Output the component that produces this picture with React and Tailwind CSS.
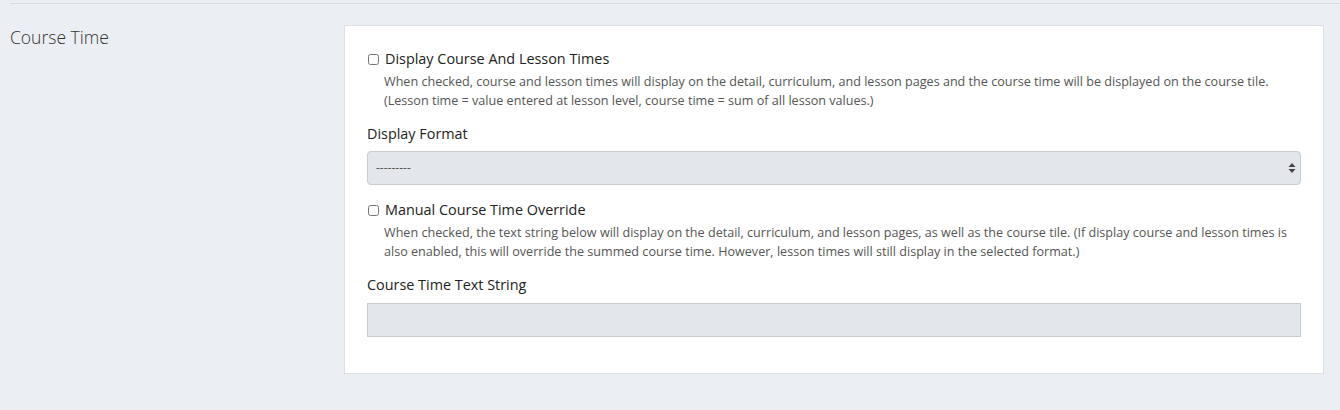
import React from 'react';

const font = { fontFamily: '"Open Sans", "Liberation Sans", sans-serif' };

const Check = ({ label, children }) => (
  <div className="flex flex-col">
    <label className="flex items-center gap-[6px] text-[14.4px] leading-[20px] text-[#222]">
      <input type="checkbox" className="w-[11px] h-[11px] m-0 ml-[1px] accent-[#888]" />
      <span>{label}</span>
    </label>
    <p className="pl-[17px] mt-[3px] text-[12.6px] leading-[19px] text-[#555]">{children}</p>
  </div>
);

export default function App() {
  return (
    <div className="w-[1340px] h-[410px] bg-[#ebeff3] overflow-hidden" style={font}>
      <div className="ml-[10px] pt-[3px]">
        <div className="border-t border-[#d6dbe0]" />
      </div>
      <div className="flex pt-[21px]">
        <div className="w-[344px] pl-[10px] text-[17.5px] leading-[24px] text-[#333] font-light">Course Time</div>
        <div className="w-[980px] bg-white border border-[#dcdfe3] px-[22px] pt-[23px] pb-[36px]">
          <Check label="Display Course And Lesson Times">
            When checked, course and lesson times will display on the detail, curriculum, and lesson pages and the course time will be displayed on the course tile.
            <br />
            (Lesson time = value entered at lesson level, course time = sum of all lesson values.)
          </Check>
          <div className="mt-[14px] text-[14.4px] leading-[20px] text-[#222]">Display Format</div>
          <div className="mt-[7px] h-[34px] bg-[#e3e6ea] border border-[#c9cdd2] rounded-[4px] flex items-center justify-between pl-[8px] pr-[4px]">
            <span className="text-[12px] text-[#555]">---------</span>
            <svg width="8" height="12" viewBox="0 0 8 12">
              <path d="M4 1 L7.5 5 L0.5 5 Z" fill="#444" />
              <path d="M4 11 L7.5 7 L0.5 7 Z" fill="#444" />
            </svg>
          </div>
          <div className="mt-[15px]">
            <Check label="Manual Course Time Override">
              When checked, the text string below will display on the detail, curriculum, and lesson pages, as well as the course tile. (If display course and lesson times is also enabled, this will override the summed course time. However, lesson times will still display in the selected format.)
            </Check>
          </div>
          <div className="mt-[14px] text-[14.4px] leading-[20px] text-[#222]">Course Time Text String</div>
          <div className="mt-[8px] h-[34px] bg-[#e3e6ea] border border-[#c9cdd2]" />
        </div>
      </div>
    </div>
  );
}
